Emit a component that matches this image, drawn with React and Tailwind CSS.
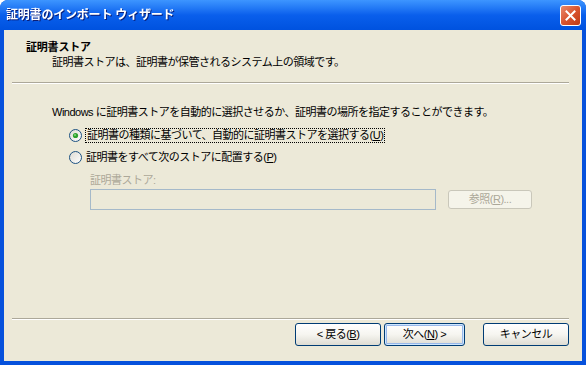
const font = "font-['Liberation_Sans','Noto_Sans_CJK_JP',sans-serif]"

function Radio({ checked }) {
  return (
    <svg width="13" height="13" viewBox="0 0 13 13" className="shrink-0">
      <defs>
        <linearGradient id={checked ? 'rg1' : 'rg2'} x1="0" y1="0" x2="1" y2="1">
          <stop offset="0" stopColor="#dcdad2" />
          <stop offset="1" stopColor="#ffffff" />
        </linearGradient>
      </defs>
      <circle cx="6.5" cy="6.5" r="6" fill={`url(#${checked ? 'rg1' : 'rg2'})`} stroke="#1c5180" strokeWidth="1" />
      {checked && <circle cx="6.5" cy="6.5" r="2.6" fill="#2ca12c" />}
      {checked && <circle cx="6" cy="6" r="1" fill="#7fd67f" />}
    </svg>
  )
}

function XpButton({ children, primary, disabled, className = '' }) {
  return (
    <div
      className={`h-[23px] flex items-center justify-center rounded-[3px] border text-[11px] tracking-[-0.5px] ${
        disabled
          ? 'border-[#c9c7ba] bg-[#f5f4ea] text-[#aca899]'
          : 'border-[#003c74] bg-gradient-to-b from-white via-[#f6f5f0] to-[#dedcd3] text-black'
      } ${primary ? 'shadow-[inset_0_0_0_1px_#cee7ff,inset_0_0_0_2px_#98b8ea]' : ''} ${className}`}
    >
      {children}
    </div>
  )
}

export default function App() {
  return (
    <div className={`w-[586px] h-[365px] bg-white ${font}`}>
      <div className="w-full h-full flex flex-col rounded-t-[8px] bg-[#0651dc] overflow-hidden">
        {/* title bar */}
        <div className="h-[30px] shrink-0 flex items-center justify-between pl-[6px] pr-[5px] bg-gradient-to-b from-[#3d95ff] via-[#0a5fec] to-[#0052df]">
          <span className="text-white font-bold text-[12px] tracking-[-0.2px] drop-shadow-[1px_1px_0_#0a1e78]">
            証明書のインポート ウィザード
          </span>
          <div className="w-[21px] h-[21px] rounded-[3px] border border-white bg-gradient-to-br from-[#e8886a] via-[#d9542f] to-[#c03a12] flex items-center justify-center">
            <svg width="11" height="11" viewBox="0 0 11 11">
              <path d="M1.5 1.5 L9.5 9.5 M9.5 1.5 L1.5 9.5" stroke="white" strokeWidth="2" strokeLinecap="square" />
            </svg>
          </div>
        </div>

        {/* client */}
        <div className="flex-1 mx-[4px] mb-[4px] bg-[#ece9d8] flex flex-col text-[11px] tracking-[-0.5px] text-black">
          <div className="pl-[22px] pt-[11px]">
            <div className="h-[13px] leading-[13px] font-bold tracking-[-0.2px]">証明書ストア</div>
            <div className="h-[13px] leading-[13px] mt-[2px] pl-[26px]">
              証明書ストアは、証明書が保管されるシステム上の領域です。
            </div>
          </div>
          <div className="mt-[13px] ml-[8px] mr-[13px] h-[2px] border-t border-[#aca899] border-b border-b-white" />

          <div className="pl-[48px]">
            <div className="mt-[22px] h-[13px] leading-[13px]">
              Windows に証明書ストアを自動的に選択させるか、証明書の場所を指定することができます。
            </div>
            <div className="mt-[8px] h-[16px] flex items-center pl-[17px]">
              <Radio checked />
              <span className="ml-[3px] px-[1px] leading-[13px] border border-dotted border-black">
                証明書の種類に基づいて、自動的に証明書ストアを選択する(<span className="underline">U</span>)
              </span>
            </div>
            <div className="mt-[6px] h-[16px] flex items-center pl-[17px]">
              <Radio />
              <span className="ml-[4px] leading-[13px]">
                証明書をすべて次のストアに配置する(<span className="underline">P</span>)
              </span>
            </div>
            <div className="mt-[9px] h-[13px] leading-[13px] pl-[38px] text-[#aca899]">証明書ストア:</div>
            <div className="mt-[2px] pl-[38px] flex items-start">
              <div className="w-[346px] h-[21px] border border-[#a5b9c9] bg-[#ece9d8]" />
              <XpButton disabled className="ml-[12px] mt-[1px] w-[84px] !h-[19px]">
                参照(<span className="underline">R</span>)...
              </XpButton>
            </div>
          </div>

          <div className="mt-auto ml-[8px] mr-[13px] h-[2px] border-t border-[#aca899] border-b border-b-white" />
          <div className="mt-[3px] mb-[15px] flex justify-end pr-[13px]">
            <XpButton className="w-[86px]">
              &lt; 戻る(<span className="underline">B</span>)
            </XpButton>
            <XpButton primary className="w-[81px] ml-[3px]">
              次へ(<span className="underline">N</span>) &gt;
            </XpButton>
            <XpButton className="w-[86px] ml-[18px]">キャンセル</XpButton>
          </div>
        </div>
      </div>
    </div>
  )
}
